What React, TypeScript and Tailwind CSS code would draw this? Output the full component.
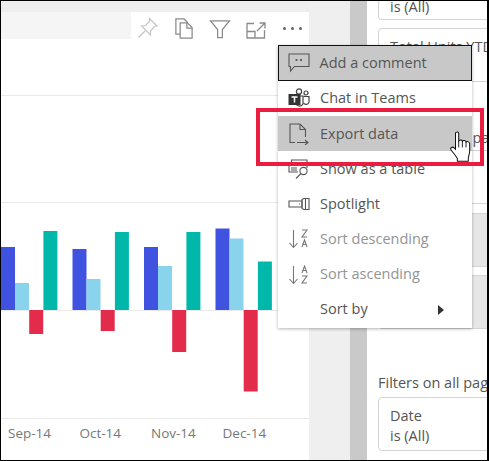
import { ReactNode } from "react";

const font = { sans: "font-['Open_Sans','Noto_Sans',sans-serif]" };

const months = ["Sep-14", "Oct-14", "Nov-14", "Dec-14"];

// x, then top of each bar: blue, light blue, bottom of red, teal
const groups = [
    { x: 1, w: 14, blue: 247, light: 283, red: 334, teal: 231 },
    { x: 72.5, w: 14, blue: 249, light: 279, red: 331, teal: 232 },
    { x: 144, w: 14, blue: 247, light: 266, red: 352, teal: 232 },
    { x: 215.5, w: 14, blue: 228.5, light: 238.5, red: 391.5, teal: 261.5 },
];

const BASE = 310;
const CHART_TOP = 200;

const ColumnChart = () => (
    <svg width="308" height="220" viewBox={`1 ${CHART_TOP} 308 220`} className="block">
        <line x1="0" x2="309" y1="202.5" y2="202.5" stroke="#e9e9e9" />
        <line x1="0" x2="309" y1="310.5" y2="310.5" stroke="#e9e9e9" />
        <line x1="0" x2="309" y1="418.5" y2="418.5" stroke="#e9e9e9" />
        {groups.map((g) => (
            <g key={g.x}>
                <rect x={g.x} y={g.blue} width={g.w} height={BASE - g.blue} fill="#4052e0" />
                <rect x={g.x + 14} y={g.light} width={g.w} height={BASE - g.light} fill="#89d4ec" />
                <rect x={g.x + 28.2} y={BASE} width={g.w} height={g.red - BASE} fill="#e32b4c" />
                <rect x={g.x + 42.4} y={g.teal} width={g.w} height={BASE - g.teal} fill="#00b8aa" />
            </g>
        ))}
    </svg>
);

const PinIcon = () => (
    <svg width="22" height="22" viewBox="0 0 22 22" fill="none" stroke="#c4c4c4" strokeWidth="1.2">
        <path d="M12.5 1.5 L20 9 L17.5 9.5 L13.5 14 L13.5 18 L4.5 9 L8.5 8.5 L12.5 4.5 Z" />
        <path d="M8 14 L1.5 20.5" />
    </svg>
);

const CopyIcon = () => (
    <svg width="20" height="21" viewBox="0 0 20 22" fill="none" stroke="#8a8a8a" strokeWidth="1.3">
        <path d="M6 17 H1.5 V1 H10 L14 5" />
        <path d="M6 5 H13.5 L18.5 10 V21 H6 Z" />
        <path d="M13 5 V10.5 H18.5" />
    </svg>
);

const FilterIcon = () => (
    <svg width="22" height="19" viewBox="0 0 22 20" fill="none" stroke="#8a8a8a" strokeWidth="1.3">
        <path d="M1 1 H21 L13.5 10 V18.5 H8.5 V10 Z" />
    </svg>
);

const FocusIcon = () => (
    <svg width="20" height="17" viewBox="0 0 20 17" fill="none" stroke="#8a8a8a" strokeWidth="1.3">
        <path d="M8 1.5 H1 V16 H18.5 V8" />
        <path d="M1 9.5 H9 V16" />
        <path d="M11 9 L19 1 M13.5 1 H19 V6.5" />
    </svg>
);

const CommentIcon = () => (
    <svg width="22" height="20" viewBox="0 0 22 20" fill="none" stroke="#555" strokeWidth="1.1">
        <path d="M1 1 H21 V13.5 H6.5 L2.5 18 V13.5 H1 Z" />
        <path d="M8.5 6 V8 M13 6 V8" strokeWidth="1.8" />
    </svg>
);

const TeamsIcon = () => (
    <svg width="22" height="21" viewBox="0 0 22 21">
        <circle cx="11" cy="3.5" r="2.6" fill="none" stroke="#444" strokeWidth="1.2" />
        <circle cx="18" cy="5" r="2" fill="none" stroke="#444" strokeWidth="1.2" />
        <path d="M8 8 H15 V16 A4 4 0 0 1 8 16 Z" fill="none" stroke="#444" strokeWidth="1.2" />
        <path d="M15.5 8.5 H21 V14 A3 3 0 0 1 15.5 15" fill="none" stroke="#444" strokeWidth="1.2" />
        <rect x="0.5" y="6" width="12" height="11" fill="#333" />
        <path d="M3.5 9 H9.5 M6.5 9 V14.5" stroke="#fff" strokeWidth="1.5" />
    </svg>
);

const ExportIcon = () => (
    <svg width="20" height="22" viewBox="0 0 20 22" fill="none" stroke="#555" strokeWidth="1.1">
        <path d="M6 19.5 H1 V1 H11 L16.5 6.5 V14" />
        <path d="M11 1 V6.5 H16.5" />
        <path d="M8 19.5 H19 M16 17 L19 19.5 L16 22" />
    </svg>
);

const TableIcon = () => (
    <svg width="23" height="20" viewBox="0 0 23 20" fill="none" stroke="#555" strokeWidth="1.1">
        <path d="M3.5 3.5 V1 H19 V9" />
        <path d="M1 3.5 H16.5 V6 M1 3.5 V13 H10" fill="#fff" />
        <path d="M1 6.5 H16 M3 9 H9 M3 11 H9" />
        <circle cx="15.5" cy="12" r="3.6" />
        <path d="M13 14.5 L8 19.5" />
    </svg>
);

const SpotlightIcon = () => (
    <svg width="22" height="12" viewBox="0 0 22 12" fill="none" stroke="#555" strokeWidth="1.1">
        <path d="M1 3 H14 V9 H1 Z" />
        <path d="M14 1.5 L16 0.5 H21 V11.5 H16 L14 10.5 Z" />
        <path d="M17.5 1 V11" />
        <path d="M11 6 H12" />
    </svg>
);

const SortIcon = ({ top, bottom }: { top: string; bottom: string }) => (
    <svg width="20" height="20" viewBox="0 0 20 20" fill="none" stroke="#777" strokeWidth="1.1">
        <path d="M4.5 1 V18 M0.5 14 L4.5 18.5 L8.5 14" />
        <path d={top} />
        <path d={bottom} />
    </svg>
);

const LETTER_Z_TOP = "M13 1 H18 L13 8 H18";
const LETTER_A_BOTTOM = "M13 18 L15.5 11 L18 18 M13.8 15.5 H17.2";
const LETTER_A_TOP = "M13 8 L15.5 1 L18 8 M13.8 5.5 H17.2";
const LETTER_Z_BOTTOM = "M13 11 H18 L13 18 H18";

const HandCursor = () => (
    <svg width="22" height="32" viewBox="0 0 24 35">
        <path
            d="M6 2.5 C6 0.5 9.5 0.5 9.5 2.5 V11 C10.5 9.5 13 9.5 13.5 11 C14.5 10 17 10 17.5 12 C19 11 21.5 12 21.5 14 V22 C21.5 25 20.5 27 20 29 V33 H8 V30 C5.5 26 3.5 24 1 20.5 C0 18.5 2.5 16.5 4.5 18.5 L6 20 Z"
            fill="#fff"
            stroke="#111"
            strokeWidth="1.1"
        />
        <path d="M9.5 11 V18 M13.5 11 V18 M17.5 12 V18" stroke="#111" fill="none" strokeWidth="1" />
    </svg>
);

const MenuItem = ({
    icon,
    label,
    className,
    disabled,
    trailing,
    iconWidth,
}: {
    icon?: ReactNode;
    label: string;
    className?: string;
    disabled?: boolean;
    trailing?: ReactNode;
    iconWidth?: string;
}) => (
    <div className={`flex h-[35.2px] items-center ${className ?? ""}`}>
        <div className={`flex shrink-0 items-center justify-center ${iconWidth ?? "w-[42px]"}`}>{icon}</div>
        <span className={`text-[14.5px] leading-none ${disabled ? "text-[#949494]" : "text-[#555]"}`}>{label}</span>
        {trailing}
    </div>
);

const ContextMenu = () => (
    <div className="absolute left-[277px] top-[44px] w-[194px] bg-white pb-[1px] shadow-[0_1px_3px_rgba(0,0,0,0.3)]">
        <MenuItem
            icon={<CommentIcon />}
            label="Add a comment"
            iconWidth="w-[40.5px]"
            className="h-[36px] border-[1.5px] border-[#111] bg-[#c8c8c8]"
        />
        <MenuItem icon={<TeamsIcon />} label="Chat in Teams" />
        <MenuItem icon={<ExportIcon />} label="Export data" className="bg-[#c8c8c8]" />
        <MenuItem icon={<TableIcon />} label="Show as a table" />
        <MenuItem icon={<SpotlightIcon />} label="Spotlight" />
        <MenuItem
            icon={<SortIcon top={LETTER_Z_TOP} bottom={LETTER_A_BOTTOM} />}
            label="Sort descending"
            disabled
        />
        <MenuItem
            icon={<SortIcon top={LETTER_A_TOP} bottom={LETTER_Z_BOTTOM} />}
            label="Sort ascending"
            disabled
        />
        <MenuItem
            label="Sort by"
            trailing={
                <div className="ml-auto mr-[28px] h-0 w-0 border-y-[5px] border-l-[6px] border-y-transparent border-l-[#333]" />
            }
        />
    </div>
);

const FilterCard = ({ lines, className }: { lines: string[]; className?: string }) => (
    <div
        className={`flex h-[54px] w-[130px] shrink-0 flex-col rounded-[4px] border border-[#d4d4d4] pl-[11px] text-[14.5px] leading-[20px] text-[#555] ${className ?? ""}`}
    >
        {lines.map((line) => (
            <span key={line} className="whitespace-nowrap">
                {line}
            </span>
        ))}
    </div>
);

const App = () => {
    return (
        <div
            className={`relative flex h-[461px] w-[489px] overflow-hidden border-y border-l border-r-2 border-black bg-[#eeeeee] ${font.sans}`}
        >
            <div className="flex w-[308px] shrink-0 flex-col pt-[11px]">
                <div className="flex h-[27px] shrink-0">
                    <div className="w-[130px] bg-[#f5f5f5]" />
                    <div className="relative flex flex-1 items-center bg-white">
                        <div className="ml-[5px] mt-[4px] flex w-[24px] justify-center">
                            <PinIcon />
                        </div>
                        <div className="ml-[14px] mt-[5px]">
                            <CopyIcon />
                        </div>
                        <div className="ml-[15px] mt-[7px]">
                            <FilterIcon />
                        </div>
                        <div className="ml-[15px] mt-[9px]">
                            <FocusIcon />
                        </div>
                        <div className="ml-[17px] flex gap-[5.5px] pt-[6px]">
                            <div className="h-[2.5px] w-[2.5px] rounded-full bg-[#666]" />
                            <div className="h-[2.5px] w-[2.5px] rounded-full bg-[#666]" />
                            <div className="h-[2.5px] w-[2.5px] rounded-full bg-[#666]" />
                        </div>
                    </div>
                </div>
                <div className="flex-1 bg-white">
                    <div className="mt-[56px] h-px bg-[#e9e9e9]" />
                    <div className="mt-[104px]">
                        <ColumnChart />
                    </div>
                    <div className="mt-[3px] flex pl-[7px] text-[13.5px] leading-[20px] text-[#777]">
                        {months.map((m) => (
                            <span key={m} className="w-[71.5px]">
                                {m}
                            </span>
                        ))}
                    </div>
                </div>
            </div>
            <div className="w-[41px] shrink-0 bg-[#efefef]" />
            <div className="w-[17px] shrink-0 bg-[#c9c9c9]" />
            <div className="flex min-w-0 flex-1 flex-col overflow-hidden bg-white pl-[11px]">
                <div className="flex h-[19px] w-[130px] shrink-0 items-end rounded-b-[4px] border-x border-b border-[#d4d4d4] pb-[2px] pl-[11px] text-[14.5px] leading-[20px] text-[#555]">
                    is (All)
                </div>
                <FilterCard lines={["Total Units YTD"]} className="mt-[8px] pt-[8px]" />
                <div className="mt-[46px] whitespace-nowrap text-[14.5px] leading-[20px] text-[#555]">
                    Filters on this page
                </div>
                <FilterCard lines={[]} className="mt-[2px]" />
                <FilterCard lines={[]} className="mt-[9px] bg-[#e6e6e6]" />
                <FilterCard lines={[]} className="mt-[8px] bg-[#e6e6e6]" />
                <div className="mt-[44px] whitespace-nowrap text-[14.5px] leading-[20px] text-[#555]">
                    Filters on all pages
                </div>
                <FilterCard lines={["Date", "is (All)"]} className="mt-[4px] pt-[8px]" />
            </div>

            <ContextMenu />

            <div className="absolute left-[255px] top-[107px] h-[58px] w-[228px] border-[4px] border-[#ea1c3f]" />
            <div className="absolute left-[449px] top-[130px]">
                <HandCursor />
            </div>
        </div>
    );
};

export default App;
